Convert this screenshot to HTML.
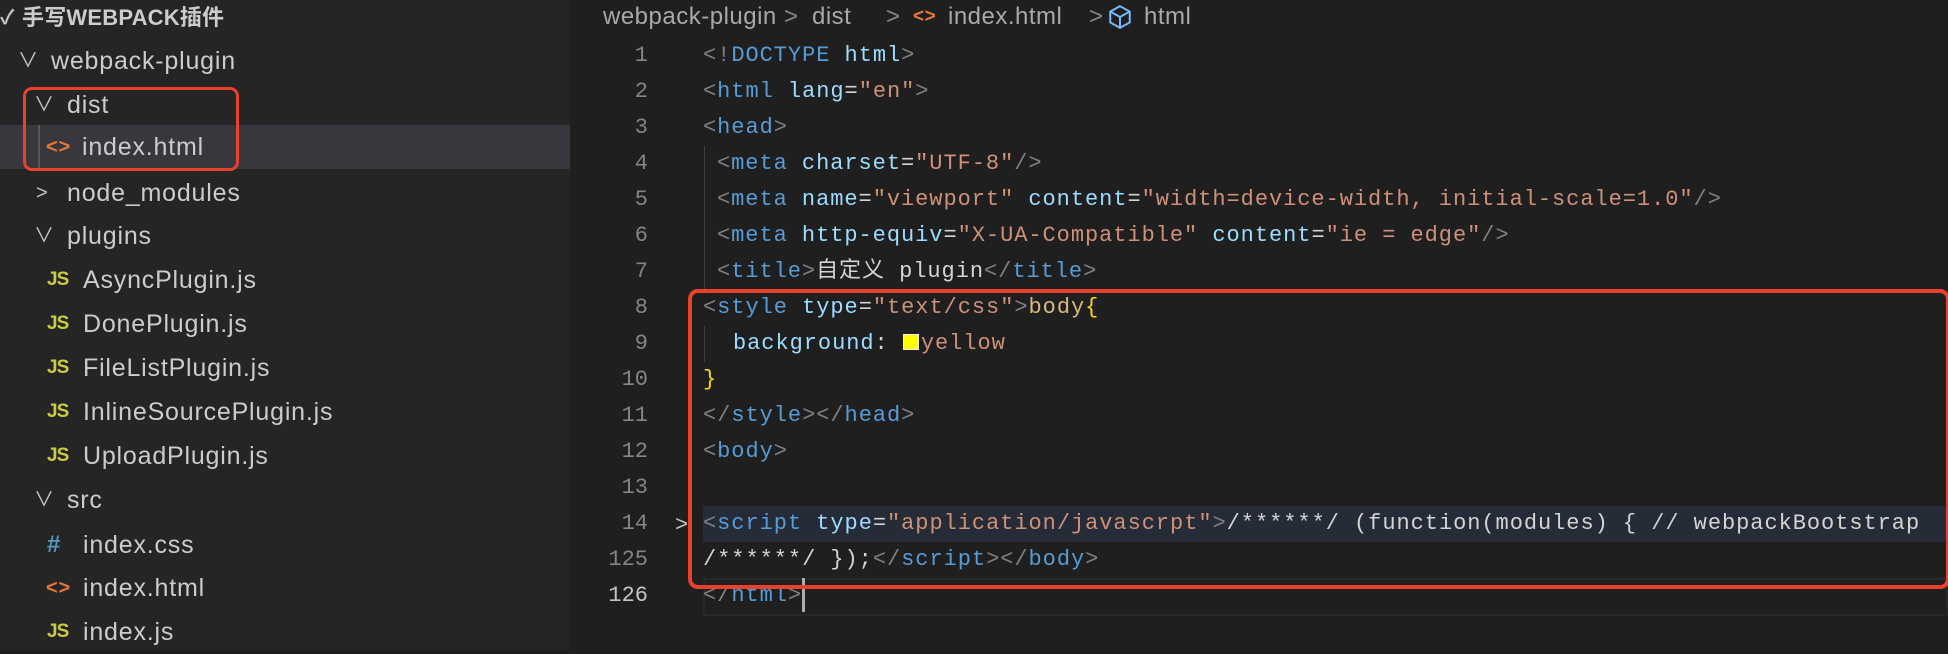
<!DOCTYPE html>
<html><head><meta charset="utf-8">
<style>
*{margin:0;padding:0;box-sizing:border-box}
body{width:1948px;height:650px;overflow:hidden;background:#1f1f1f;position:relative;font-family:"Liberation Sans","Noto Sans CJK SC",sans-serif}
#side{position:absolute;left:0;top:0;width:570px;height:650px;background:#252526}
.r{position:absolute;left:0;width:570px;height:44px;line-height:44px;color:#cccccc;font-size:25px;letter-spacing:0.8px;white-space:nowrap}
.r span{position:absolute}
.chev{color:#c5c5c5;font-size:20px}
.js{color:#cbcb41;font-weight:bold;font-size:19px;letter-spacing:-1px}
.hash{color:#519aba;font-weight:bold;font-size:24px}
.ang{color:#e37933;font-size:20px;font-weight:bold}
.c{position:absolute;left:0;height:36px;line-height:36px;font-family:"Liberation Mono","Noto Sans CJK SC",monospace;font-size:22px;letter-spacing:0.95px;white-space:pre;color:#d4d4d4}
.n{position:absolute;width:80px;left:568px;text-align:right;height:36px;line-height:36px;font-family:"Liberation Mono",monospace;font-size:22px;color:#858585}
.b{color:#808080}.t{color:#569cd6}.a{color:#9cdcfe}.s{color:#ce9178}.sel{color:#d7ba7d}.br{color:#ffd700}
.bc{position:absolute;top:0;height:36px;line-height:34px;font-size:24px;letter-spacing:0.5px;color:#a9a9a9;white-space:nowrap}
</style></head><body>
<div id="side">
<div class="r" style="top:-4px;font-weight:bold;font-size:22px;letter-spacing:0.2px"><span class="chev" style="left:0">✓</span><span style="left:22px">手写WEBPACK插件</span></div>
<div class="r" style="top:39px"><span class="chev" style="left:18px">∨</span><span style="left:51px">webpack-plugin</span></div>
<div class="r" style="top:83px"><span class="chev" style="left:34px">∨</span><span style="left:67px">dist</span></div>
<div class="r" style="top:125px;height:44px;background:#37373d"><span style="left:38px;top:0;width:2px;height:44px;background:#585858"></span><span class="ang" style="left:46px">&lt;&gt;</span><span style="left:82px">index.html</span></div>
<div class="r" style="top:171px"><span class="chev" style="left:36px">&gt;</span><span style="left:67px">node_modules</span></div>
<div class="r" style="top:214px"><span class="chev" style="left:34px">∨</span><span style="left:67px">plugins</span></div>
<div class="r" style="top:258px"><span class="js" style="left:47px">JS</span><span style="left:83px">AsyncPlugin.js</span></div>
<div class="r" style="top:302px"><span class="js" style="left:47px">JS</span><span style="left:83px">DonePlugin.js</span></div>
<div class="r" style="top:346px"><span class="js" style="left:47px">JS</span><span style="left:83px">FileListPlugin.js</span></div>
<div class="r" style="top:390px"><span class="js" style="left:47px">JS</span><span style="left:83px">InlineSourcePlugin.js</span></div>
<div class="r" style="top:434px"><span class="js" style="left:47px">JS</span><span style="left:83px">UploadPlugin.js</span></div>
<div class="r" style="top:478px"><span class="chev" style="left:34px">∨</span><span style="left:67px">src</span></div>
<div class="r" style="top:523px"><span class="hash" style="left:47px">#</span><span style="left:83px">index.css</span></div>
<div class="r" style="top:566px"><span class="ang" style="left:46px">&lt;&gt;</span><span style="left:83px">index.html</span></div>
<div class="r" style="top:610px"><span class="js" style="left:47px">JS</span><span style="left:83px">index.js</span></div>
<div style="position:absolute;left:23px;top:87px;width:216px;height:84px;border:3.5px solid #e8412c;border-radius:9px"></div>
</div>

<div class="bc" style="left:603px">webpack-plugin</div>
<div class="bc" style="left:784px;color:#888">&gt;</div>
<div class="bc" style="left:812px">dist</div>
<div class="bc" style="left:886px;color:#888">&gt;</div>
<div class="bc" style="left:913px;color:#e37933;font-size:19px;font-weight:bold">&lt;&gt;</div>
<div class="bc" style="left:948px">index.html</div>
<div class="bc" style="left:1089px;color:#888">&gt;</div>
<div class="bc" style="left:1107px;top:4px"><svg width="26" height="26" viewBox="0 0 24 24" fill="none" stroke="#75beff" stroke-width="1.8"><path d="M12 2 21 7v10l-9 5-9-5V7z M3 7l9 5 9-5 M12 12v10"/></svg></div>
<div class="bc" style="left:1144px">html</div>

<div style="position:absolute;left:703px;top:506px;width:1245px;height:36px;background:#252b37"></div>
<div style="position:absolute;left:703px;top:578px;width:1245px;height:38px;border:2px solid #282828"></div>
<div style="position:absolute;left:704px;top:146px;width:1px;height:144px;background:#404040"></div>
<div style="position:absolute;left:704px;top:326px;width:1px;height:36px;background:#404040"></div>

<div class="n" style="top:38px">1</div><div class="n" style="top:74px">2</div><div class="n" style="top:110px">3</div><div class="n" style="top:146px">4</div><div class="n" style="top:182px">5</div><div class="n" style="top:218px">6</div><div class="n" style="top:254px">7</div><div class="n" style="top:290px">8</div><div class="n" style="top:326px">9</div><div class="n" style="top:362px">10</div><div class="n" style="top:398px">11</div><div class="n" style="top:434px">12</div><div class="n" style="top:470px">13</div><div class="n" style="top:506px">14</div><div class="n" style="top:542px">125</div><div class="n" style="top:578px;color:#c6c6c6">126</div>
<div class="n" style="top:506px;left:668px;width:20px;color:#c5c5c5;font-family:'Liberation Sans'">&gt;</div>

<div class="c" style="top:38px;left:703px"><span class="b">&lt;!</span><span class="t">DOCTYPE</span> <span class="a">html</span><span class="b">&gt;</span></div>
<div class="c" style="top:74px;left:703px"><span class="b">&lt;</span><span class="t">html</span> <span class="a">lang</span>=<span class="s">"en"</span><span class="b">&gt;</span></div>
<div class="c" style="top:110px;left:703px"><span class="b">&lt;</span><span class="t">head</span><span class="b">&gt;</span></div>
<div class="c" style="top:146px;left:717px"><span class="b">&lt;</span><span class="t">meta</span> <span class="a">charset</span>=<span class="s">"UTF-8"</span><span class="b">/&gt;</span></div>
<div class="c" style="top:182px;left:717px"><span class="b">&lt;</span><span class="t">meta</span> <span class="a">name</span>=<span class="s">"viewport"</span> <span class="a">content</span>=<span class="s">"width=device-width, initial-scale=1.0"</span><span class="b">/&gt;</span></div>
<div class="c" style="top:218px;left:717px"><span class="b">&lt;</span><span class="t">meta</span> <span class="a">http-equiv</span>=<span class="s">"X-UA-Compatible"</span> <span class="a">content</span>=<span class="s">"ie = edge"</span><span class="b">/&gt;</span></div>
<div class="c" style="top:254px;left:717px"><span class="b">&lt;</span><span class="t">title</span><span class="b">&gt;</span>自定义 plugin<span class="b">&lt;/</span><span class="t">title</span><span class="b">&gt;</span></div>
<div class="c" style="top:290px;left:703px"><span class="b">&lt;</span><span class="t">style</span> <span class="a">type</span>=<span class="s">"text/css"</span><span class="b">&gt;</span><span class="sel">body</span><span class="br">{</span></div>
<div class="c" style="top:326px;left:733px"><span class="a">background</span>: <span style="display:inline-block;width:16px;height:16px;background:#ffff00;border:1.5px solid #eee;vertical-align:-1px;margin-right:2px"></span><span class="s">yellow</span></div>
<div class="c" style="top:362px;left:703px"><span class="br">}</span></div>
<div class="c" style="top:398px;left:703px"><span class="b">&lt;/</span><span class="t">style</span><span class="b">&gt;&lt;/</span><span class="t">head</span><span class="b">&gt;</span></div>
<div class="c" style="top:434px;left:703px"><span class="b">&lt;</span><span class="t">body</span><span class="b">&gt;</span></div>
<div class="c" style="top:506px;left:703px"><span class="b">&lt;</span><span class="t">script</span> <span class="a">type</span>=<span class="s">"application/javascrpt"</span><span class="b">&gt;</span>/******/ (function(modules) { // webpackBootstrap</div>
<div class="c" style="top:542px;left:703px">/******/ });<span class="b">&lt;/</span><span class="t">script</span><span class="b">&gt;&lt;/</span><span class="t">body</span><span class="b">&gt;</span></div>
<div class="c" style="top:578px;left:703px"><span class="b">&lt;/</span><span class="t">html</span><span class="b">&gt;</span><span style="display:inline-block;width:3px;height:34px;background:#aeafad;vertical-align:middle"></span></div>

<div style="position:absolute;left:688px;top:289px;width:1262px;height:300px;border:4px solid #e8412c;border-radius:10px"></div>
</body></html>
